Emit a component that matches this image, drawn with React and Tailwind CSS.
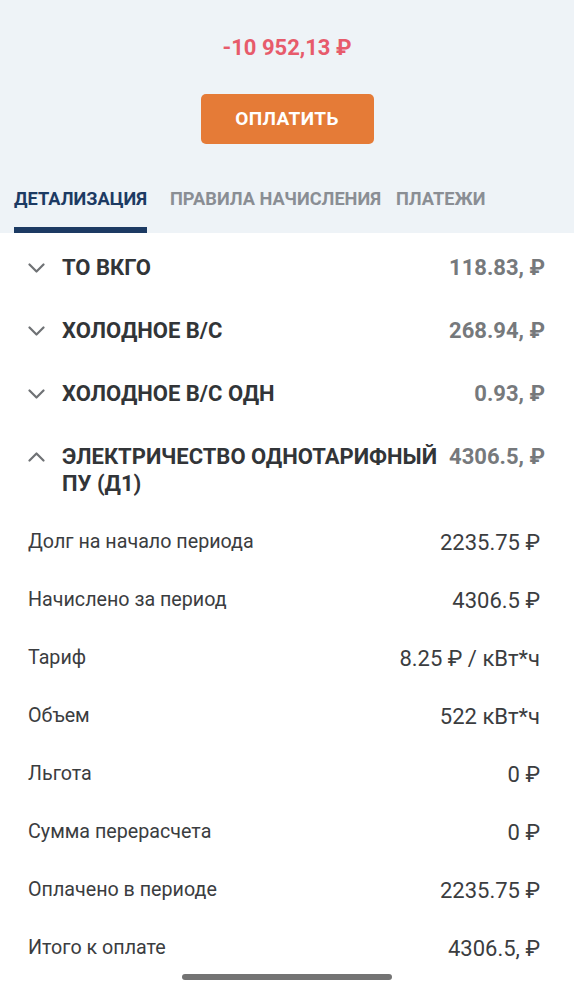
const TABS = ['ДЕТАЛИЗАЦИЯ', 'ПРАВИЛА НАЧИСЛЕНИЯ', 'ПЛАТЕЖИ'];

const SERVICES = [
  { name: 'ТО ВКГО', sum: '118.83, ₽' },
  { name: 'ХОЛОДНОЕ В/С', sum: '268.94, ₽' },
  { name: 'ХОЛОДНОЕ В/С ОДН', sum: '0.93, ₽' },
];

const DETAILS = [
  ['Долг на начало периода', '2235.75 ₽'],
  ['Начислено за период', '4306.5 ₽'],
  ['Тариф', '8.25 ₽ / кВт*ч'],
  ['Объем', '522 кВт*ч'],
  ['Льгота', '0 ₽'],
  ['Сумма перерасчета', '0 ₽'],
  ['Оплачено в периоде', '2235.75 ₽'],
  ['Итого к оплате', '4306.5, ₽'],
];

const Chevron = ({ up }) => (
  <svg width="17" height="10" viewBox="0 0 17 10" className="shrink-0">
    <polyline
      points={up ? '1.5,8.5 8.5,1.5 15.5,8.5' : '1.5,1.5 8.5,8.5 15.5,1.5'}
      fill="none"
      stroke="#6f7275"
      strokeWidth="2.2"
      strokeLinecap="round"
      strokeLinejoin="round"
    />
  </svg>
);

export default function App() {
  return (
    <div className="relative min-h-[984px] bg-white font-['Roboto',sans-serif]">
      {/* header */}
      <div className="bg-[#eef3f7] pt-[35px]">
        <p className="text-center text-[22px] leading-[26px] font-bold text-[#e75b6b]">-10 952,13 ₽</p>
        <div className="flex justify-center mt-[33px]">
          <button className="w-[173px] h-[50px] rounded-[5px] bg-[#e57b37] text-white text-[19px] font-bold tracking-[0.4px]">
            ОПЛАТИТЬ
          </button>
        </div>
        <div className="flex px-[14px] mt-[45px]">
          {TABS.map((t, i) => (
            <div key={t} className={`flex flex-col ${i === 1 ? 'ml-[23px]' : i === 2 ? 'ml-[15px]' : ''}`}>
              <span className={`text-[18.2px] leading-[20px] font-bold ${i === 0 ? 'text-[#1c3a63]' : 'text-[#8a8e94]'}`}>{t}</span>
              <div className={`mt-[18px] h-[6px] ${i === 0 ? 'bg-[#1c3a63]' : ''}`} />
            </div>
          ))}
        </div>
      </div>

      {/* services */}
      <div className="pt-[3px]">
        {SERVICES.map((s) => (
          <div key={s.name} className="flex items-center py-[18px] pl-[28px] pr-[29px]">
            <Chevron />
            <span className="ml-[17px] flex-1 text-[22px] leading-[27px] font-bold text-[#323538]">{s.name}</span>
            <span className="text-[22px] leading-[27px] font-bold text-[#76797c]">{s.sum}</span>
          </div>
        ))}
        <div className="flex items-start pt-[18px] pb-[15px] pl-[28px] pr-[29px]">
          <div className="h-[27px] flex items-center">
            <Chevron up />
          </div>
          <span className="ml-[17px] flex-1 text-[22px] leading-[27px] font-bold text-[#323538]">
            ЭЛЕКТРИЧЕСТВО ОДНОТАРИФНЫЙ ПУ (Д1)
          </span>
          <span className="ml-[4px] text-[22px] leading-[27px] font-bold text-[#76797c] whitespace-nowrap">4306.5, ₽</span>
        </div>
      </div>

      {/* details */}
      <div className="pt-[1px]">
        {DETAILS.map(([label, value]) => (
          <div key={label} className="flex items-center justify-between h-[58px] pl-[28px] pr-[34px] text-[#3b3d3f]">
            <span className="text-[19.7px]">{label}</span>
            <span className="text-[22px]">{value}</span>
          </div>
        ))}
      </div>

      {/* home indicator */}
      <div className="absolute left-[182px] top-[974px] w-[210px] h-[6px] rounded-full bg-[#747474]" />
    </div>
  );
}
